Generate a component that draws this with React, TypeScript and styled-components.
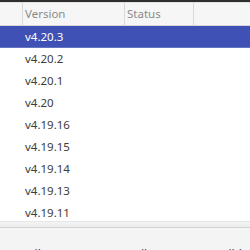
import React from 'react'
import styled, { createGlobalStyle } from 'styled-components'

const versions = [
  'v4.20.3',
  'v4.20.2',
  'v4.20.1',
  'v4.20',
  'v4.19.16',
  'v4.19.15',
  'v4.19.14',
  'v4.19.13',
  'v4.19.11',
]

const GlobalStyle = createGlobalStyle`
  html, body {
    margin: 0;
    padding: 0;
    background: #ffffff;
    overflow: hidden;
  }
  body {
    font-family: 'Noto Sans', 'Open Sans', sans-serif;
  }
`

const App = () => {
  return (
    <>
      <GlobalStyle />
      <Window>
        <TopEdge />
        <HeaderRow>
          <HeadCell />
          <HeadCell bordered>Version</HeadCell>
          <HeadCell bordered>Status</HeadCell>
          <HeadCell bordered />
        </HeaderRow>
        <List>
          {versions.map((v, i) => (
            <Row key={v} selected={i === 0}>
              {v}
            </Row>
          ))}
        </List>
        <ScrollTrack />
        <Footer>
          <FooterLabel>Details</FooterLabel>
          <FooterLabel>Install</FooterLabel>
          <FooterLabel>Build</FooterLabel>
        </Footer>
      </Window>
    </>
  )
}

export default App

const Window = styled.div`
  width: 250px;
  height: 250px;
  display: flex;
  flex-direction: column;
  overflow: hidden;
  background: #ffffff;
`

const TopEdge = styled.div`
  height: 2px;
  flex: none;
  background: #2e2e2e;
`

const HeaderRow = styled.div`
  flex: none;
  height: 22px;
  display: grid;
  grid-template-columns: 22px 102px 69px 1fr;
  background: #f6f6f6;
  border-top: 1px solid #e2e2e2;
  border-bottom: 1px solid #d6d6d6;
  box-sizing: content-box;
`

const HeadCell = styled.div<{ bordered?: boolean }>`
  border-left: ${(p) => (p.bordered ? '1px solid #d9d9d9' : 'none')};
  padding-left: 2px;
  font-size: 11.5px;
  line-height: 22px;
  color: #8a8a8a;
  white-space: nowrap;
`

const List = styled.div`
  flex: 1;
  overflow: hidden;
  display: flex;
  flex-direction: column;
`

const Row = styled.div<{ selected?: boolean }>`
  flex: none;
  height: 22px;
  line-height: 22px;
  padding-left: 25px;
  font-size: 11.5px;
  color: ${(p) => (p.selected ? '#ffffff' : '#3c3c3c')};
  background: ${(p) => (p.selected ? '#3f51b5' : 'transparent')};
  border-bottom: ${(p) => (p.selected ? '1px solid #6573c3' : 'none')};
  box-sizing: border-box;
`

const ScrollTrack = styled.div`
  flex: none;
  height: 5px;
  background: linear-gradient(#f4f4f4, #ececec);
  border-top: 1px solid #e6e6e6;
  border-bottom: 1px solid #d4d4d4;
`

const Footer = styled.div`
  flex: none;
  height: 22px;
  background: #f4f4f4;
  display: flex;
  align-items: flex-start;
  padding: 20px 8px 0;
  box-sizing: border-box;
  justify-content: space-between;
  overflow: hidden;
`

const FooterLabel = styled.span`
  font-size: 12px;
  line-height: 14px;
  color: #3c3c3c;
`
